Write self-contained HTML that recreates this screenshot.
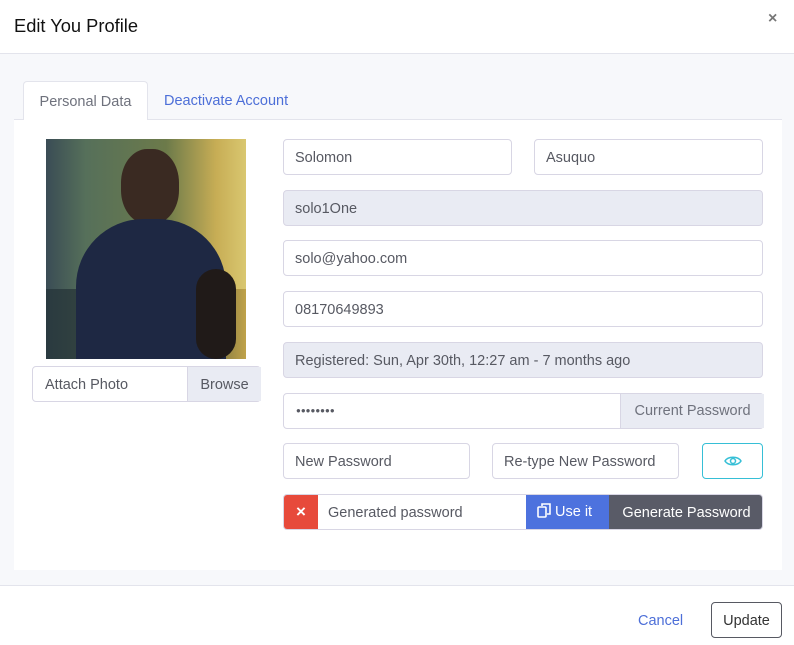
<!DOCTYPE html>
<html><head><style>
*{box-sizing:border-box;margin:0;padding:0}
body{width:794px;height:645px;background:#fff;font-family:"Liberation Sans",sans-serif;position:relative;overflow:hidden;color:#575962}
.a{position:absolute}
.inp{position:absolute;height:36px;border:1px solid #d8d6e4;border-radius:4px;background:#fff;font-size:14.5px;color:#575962;padding:0 11px;line-height:36px;white-space:nowrap}
.dis{background:#e9ebf3}
</style></head><body>
<div class="a" style="left:14px;top:15px;font-size:18.3px;color:#111">Edit You Profile</div>
<div class="a" style="left:768px;top:10px;font-size:16px;color:#777;font-weight:bold">×</div>
<div class="a" style="left:0;top:53px;width:794px;height:533px;background:#f7f8fb;border-top:1px solid #e3e4ec;border-bottom:1px solid #e3e4ec"></div>
<div class="a" style="left:14px;top:119px;width:768px;height:451px;background:#fff;border-top:1px solid #e3e4ec"></div>
<div class="a" style="left:23px;top:81px;width:125px;height:39px;background:#fff;border:1px solid #e3e4ec;border-bottom:none;border-radius:4px 4px 0 0;font-size:14.5px;color:#6f727d;text-align:center;line-height:40px">Personal Data</div>
<div class="a" style="left:164px;top:93px;font-size:14.5px;color:#4d6fd8">Deactivate Account</div>
<div class="a" style="left:46px;top:139px;width:200px;height:220px;overflow:hidden;background:linear-gradient(90deg,#3a4c55 0%,#56705a 20%,#6c7a4a 60%,#c7ad55 85%,#d9c770 100%)">
<div class="a" style="left:0;top:150px;width:200px;height:70px;background:linear-gradient(90deg,#2a3a40,#3f5040 50%,#6a6840 80%,#bfa24a)"></div>
<div class="a" style="left:75px;top:10px;width:58px;height:75px;border-radius:45%;background:#3a2a22"></div>
<div class="a" style="left:30px;top:80px;width:150px;height:150px;border-radius:45% 45% 0 0;background:#1e2843"></div>
<div class="a" style="left:150px;top:130px;width:40px;height:90px;background:#201a18;border-radius:20px"></div>
</div>
<div class="inp" style="left:32px;top:366px;width:229px;height:36px;padding:0">
<span class="a" style="left:12px;top:0;line-height:36px">Attach Photo</span>
<span class="a dis" style="left:154px;top:0;width:74px;height:34px;line-height:36px;text-align:center;border-left:1px solid #d8d6e4">Browse</span></div>
<div class="inp" style="left:283px;top:139px;width:229px">Solomon</div>
<div class="inp" style="left:534px;top:139px;width:229px">Asuquo</div>
<div class="inp dis" style="left:283px;top:190px;width:480px">solo1One</div>
<div class="inp" style="left:283px;top:240px;width:480px">solo@yahoo.com</div>
<div class="inp" style="left:283px;top:291px;width:480px">08170649893</div>
<div class="inp dis" style="left:283px;top:342px;width:480px">Registered: Sun, Apr 30th, 12:27 am - 7 months ago</div>
<div class="inp" style="left:283px;top:393px;width:481px;padding:0">
<span class="a" style="left:12px;top:0;font-size:8px;letter-spacing:0px;line-height:34px">●●●●●●●●</span>
<span class="a dis" style="left:336px;top:0;width:144px;height:34px;line-height:34px;text-align:center;border-left:1px solid #d8d6e4;color:#6f727d">Current Password</span></div>
<div class="inp" style="left:283px;top:443px;width:187px">New Password</div>
<div class="inp" style="left:492px;top:443px;width:187px">Re-type New Password</div>
<div class="inp" style="left:702px;top:443px;width:61px;border-color:#36bfd6;text-align:center;line-height:0">
<svg width="18" height="12" viewBox="0 0 18 12" style="margin-top:11px"><path d="M1 6C4 1 14 1 17 6C14 11 4 11 1 6Z" fill="none" stroke="#36bfd6" stroke-width="1.5"/><circle cx="9" cy="6" r="2.5" fill="none" stroke="#36bfd6" stroke-width="1.5"/></svg></div>
<div class="a" style="left:283px;top:494px;width:480px;height:36px;border:1px solid #d8d6e4;border-radius:4px;overflow:hidden;background:#fff">
<div class="a" style="left:0;top:0;width:34px;height:36px;background:#e74a3b;color:#fff;font-weight:bold;text-align:center;line-height:34px;font-size:17px">×</div>
<div class="a" style="left:44px;top:0;line-height:36px;font-size:14.5px">Generated password</div>
<div class="a" style="left:242px;top:-1px;width:83px;height:36px;background:#4d72de;color:#fff;font-size:14.5px;line-height:36px;padding-left:11px">
<svg width="14" height="15" viewBox="0 0 14 15" style="vertical-align:-2px;margin-right:4px"><rect x="1" y="4" width="8" height="10" rx="1" fill="none" stroke="#fff" stroke-width="1.6"/><path d="M5 3V1H13V11H10" fill="none" stroke="#fff" stroke-width="1.6"/></svg>Use it</div>
<div class="a" style="left:325px;top:-1px;width:155px;height:36px;background:#595b67;color:#fff;font-size:14.5px;line-height:38px;text-align:center">Generate Password</div>
</div>
<div class="a" style="left:638px;top:613px;font-size:14.5px;color:#4d6fd8">Cancel</div>
<div class="a" style="left:711px;top:602px;width:71px;height:36px;border:1px solid #575962;border-radius:4px;font-size:14.5px;color:#333;text-align:center;line-height:36px">Update</div>
</body></html>
